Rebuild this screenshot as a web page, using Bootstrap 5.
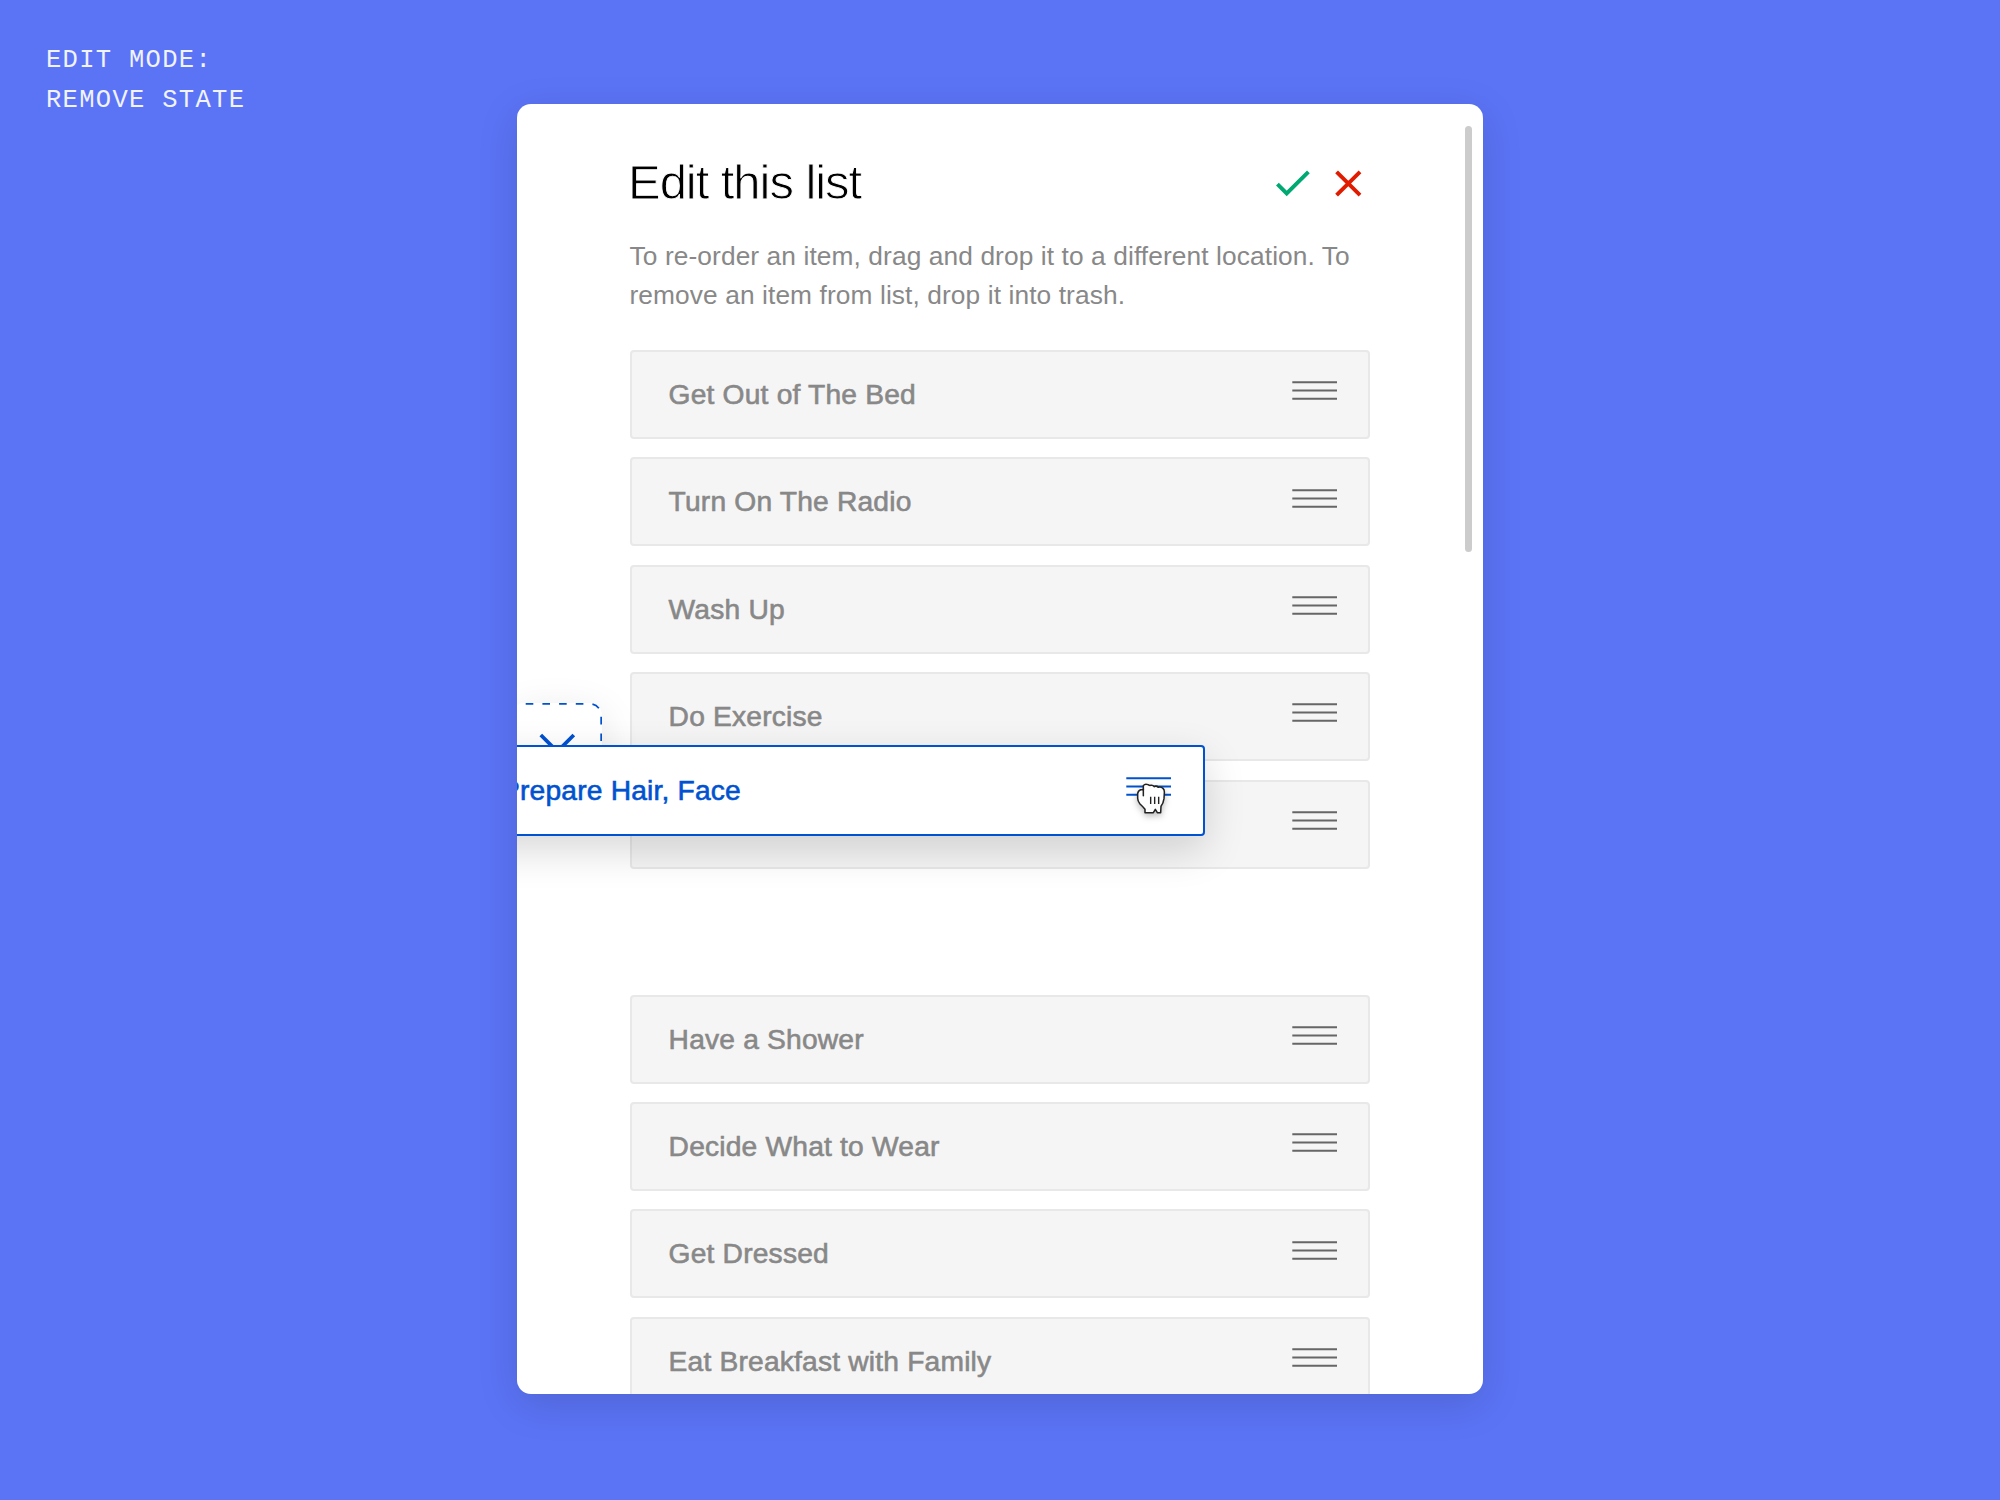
<!DOCTYPE html>
<html lang="en">
<head>
<meta charset="utf-8">
<meta name="viewport" content="width=device-width, initial-scale=1">
<title>Edit this list</title>
<link href="https://cdn.jsdelivr.net/npm/bootstrap@5.3.0/dist/css/bootstrap.min.css" rel="stylesheet">
<style>
  body { width: 2000px; height: 1500px; background: #5b74f6; font-family: "Liberation Sans", Arial, sans-serif; }
  .state-label { left: 46px; top: 40.5px; color: #f1f3ff; font: 25.5px/40.6px "Liberation Mono", "Courier New", monospace; letter-spacing: 1.3px; }
  .panel { width: 966px; height: 1290px; margin-top: 104px; padding: 48px 113px 0; border-radius: 14px; box-shadow: 0 10px 40px rgba(0,0,0,.14); }
  .panel-head { height: 60px; }
  .panel-title { font-size: 49px; line-height: 60px; letter-spacing: -1.05px; margin-left: -2px; color: #000; -webkit-text-stroke: .9px #fff; }
  .actions { gap: 25px; padding: 3px 8px 0 0; }
  .help { margin: 25.3px -12px 0 -.5px; font-size: 26.3px; line-height: 39px; letter-spacing: .1px; color: #888; }
  .items { margin-top: 34.7px; gap: 18.43px; }
  .item { height: 89px; flex: none; padding: 0 31px 0 36.6px; border: 2px solid #e8e8e8; border-radius: 4px; background: #f5f5f5; color: #888; font-size: 28.2px; letter-spacing: .19px; line-height: 43px; -webkit-text-stroke: .6px currentColor; }
  .item svg { margin-bottom: 7.6px; color: #666; }
  .slot { height: 89px; flex: none; }
  .item.dragged { left: -53px; top: 641.3px; width: 740.5px; height: 90.5px; padding-right: 32px; padding-left: 35px; background: #fff; border-color: #0052d0; color: #0052d0; box-shadow: 0 14px 40px rgba(0,0,0,.155); z-index: 2; }
  .item.dragged svg.handle { color: #0052d0; }
  .trash { left: -5px; top: 599px; width: 90px; height: 90px; border-radius: 12px; background: #fff; box-shadow: 0 10px 40px rgba(0,0,0,.11); }
  .item svg.grab { right: 36px; top: 34px; margin: 0; filter: drop-shadow(0 3px 3px rgba(0,0,0,.25)); }
  .thumb { right: 11px; top: 22px; width: 7px; height: 426px; background: #ccc; border-radius: 4px; }
</style>
<script src="https://cdn.jsdelivr.net/npm/bootstrap@5.3.0/dist/js/bootstrap.bundle.min.js"></script>
</head>
<body class="d-flex justify-content-center align-items-start overflow-hidden position-relative">
<svg class="d-none"><symbol id="lines" viewBox="0 0 45 19"><path d="M.3 1.2H45M.3 9.5H45M.3 17.8H45" stroke="currentColor" stroke-width="1.9"/></symbol></svg>
<div class="state-label position-absolute">EDIT MODE:<br>REMOVE STATE</div>

<main class="panel bg-white position-relative overflow-hidden">
  <header class="panel-head d-flex justify-content-between align-items-center">
    <h1 class="panel-title fw-normal mb-0">Edit this list</h1>
    <div class="actions d-flex align-items-center">
      <svg width="34" height="27" fill="none" stroke="#00a872" stroke-width="3.9"><path d="M1.4 14.2 10.7 23.4 32.4 1.8"/></svg>
      <svg width="27" height="27" fill="none" stroke="#e01b00" stroke-width="3.9"><path d="M1.6 1.8 25 25.2M25 1.8 1.6 25.2"/></svg>
    </div>
  </header>
  <p class="help">To re-order an item, drag and drop it to a different location. To<br>remove an item from list, drop it into trash.</p>

  <div class="items d-flex flex-column">
    <div class="item d-flex align-items-center justify-content-between"><span>Get Out of The Bed</span><svg width="45" height="19"><use href="#lines"/></svg></div>
    <div class="item d-flex align-items-center justify-content-between"><span>Turn On The Radio</span><svg width="45" height="19"><use href="#lines"/></svg></div>
    <div class="item d-flex align-items-center justify-content-between"><span>Wash Up</span><svg width="45" height="19"><use href="#lines"/></svg></div>
    <div class="item d-flex align-items-center justify-content-between"><span>Do Exercise</span><svg width="45" height="19"><use href="#lines"/></svg></div>
    <div class="item d-flex align-items-center justify-content-end"><svg width="45" height="19"><use href="#lines"/></svg></div>
    <div class="slot"></div>
    <div class="item d-flex align-items-center justify-content-between"><span>Have a Shower</span><svg width="45" height="19"><use href="#lines"/></svg></div>
    <div class="item d-flex align-items-center justify-content-between"><span>Decide What to Wear</span><svg width="45" height="19"><use href="#lines"/></svg></div>
    <div class="item d-flex align-items-center justify-content-between"><span>Get Dressed</span><svg width="45" height="19"><use href="#lines"/></svg></div>
    <div class="item d-flex align-items-center justify-content-between"><span>Eat Breakfast with Family</span><svg width="45" height="19"><use href="#lines"/></svg></div>
  </div>

  <!-- trash drop zone, partly outside the panel -->
  <div class="trash position-absolute">
    <svg class="d-block" width="90" height="90" fill="none" stroke="#0052d0">
      <path d="M13.7 .9H78A11.2 11.2 0 0 1 89.2 12.5V90" stroke-width="1.8" stroke-dasharray="7.6 9.1"/>
      <path d="M28.8 32 61.8 65M61.8 32 28.8 65" stroke-width="3.8"/>
    </svg>
  </div>

  <!-- item being dragged -->
  <div class="item dragged position-absolute d-flex align-items-center justify-content-between"><span>Prepare Hair, Face</span><svg class="handle" width="45" height="19"><use href="#lines"/></svg>
    <svg class="grab position-absolute" width="32" height="36" viewBox="165 152 96 108" fill="#fff" stroke="#222" stroke-width="4.6" stroke-linejoin="round" stroke-linecap="round">
      <path d="M190 178V166Q195 159 204 163Q209 166 212 165Q218 163 223 169Q229 165 235 171Q242 168 249 174Q254 179 253 188L252 205Q250 219 243 228L242 247H232L226 237 220 247H195V237Q188 228 180 221Q173 213 173 204V190Q174 181 182 178Z"/>
      <path d="M190 176V196" fill="none"/>
      <path d="M212 199V221M224 199V221M236 199V221" stroke-width="4.2" stroke-linecap="butt"/>
    </svg>
  </div>

  <div class="thumb position-absolute"></div>
</main>
</body>
</html>
